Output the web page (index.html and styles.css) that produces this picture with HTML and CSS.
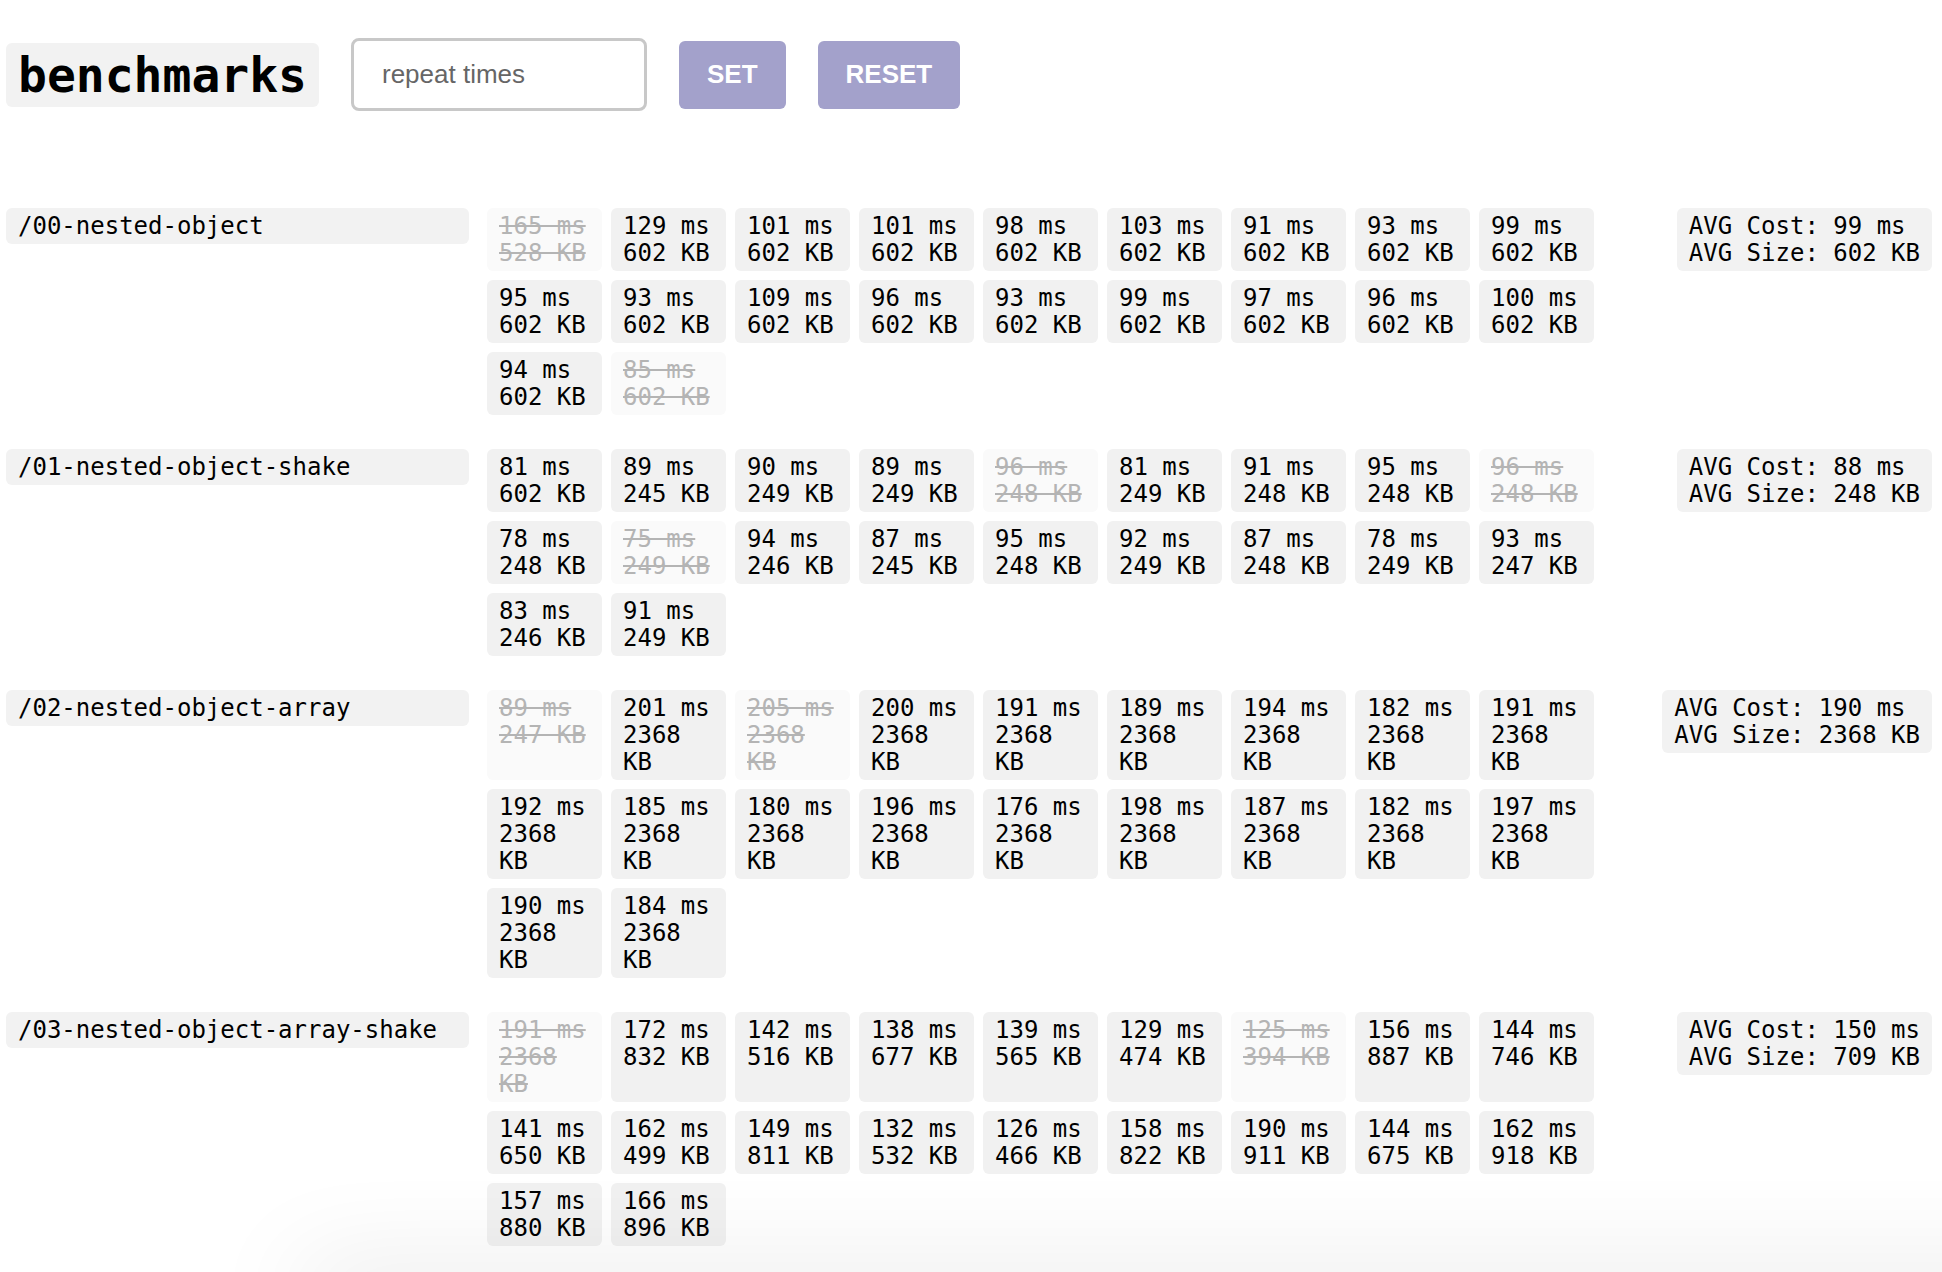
FILE: index.html
```html
<!DOCTYPE html>
<html lang="en">
<head>
<meta charset="utf-8">
<title>benchmarks</title>
<link rel="stylesheet" href="styles.css">
</head>
<body>
<header class="toolbar">
  <h1 class="title">benchmarks</h1>
  <input class="repeat" type="text" placeholder="repeat times">
  <button class="btn">SET</button>
  <button class="btn">RESET</button>
</header>

<main class="suites">
  <section class="bench">
    <div class="name">/00-nested-object</div>
    <div class="runs">
      <div class="run off">165 ms 528 KB</div>
      <div class="run">129 ms 602 KB</div>
      <div class="run">101 ms 602 KB</div>
      <div class="run">101 ms 602 KB</div>
      <div class="run">98 ms 602 KB</div>
      <div class="run">103 ms 602 KB</div>
      <div class="run">91 ms 602 KB</div>
      <div class="run">93 ms 602 KB</div>
      <div class="run">99 ms 602 KB</div>
      <div class="run">95 ms 602 KB</div>
      <div class="run">93 ms 602 KB</div>
      <div class="run">109 ms 602 KB</div>
      <div class="run">96 ms 602 KB</div>
      <div class="run">93 ms 602 KB</div>
      <div class="run">99 ms 602 KB</div>
      <div class="run">97 ms 602 KB</div>
      <div class="run">96 ms 602 KB</div>
      <div class="run">100 ms 602 KB</div>
      <div class="run">94 ms 602 KB</div>
      <div class="run off">85 ms 602 KB</div>
    </div>
    <div class="avg"><div>AVG Cost: 99 ms</div><div>AVG Size: 602 KB</div></div>
  </section>

  <section class="bench">
    <div class="name">/01-nested-object-shake</div>
    <div class="runs">
      <div class="run">81 ms 602 KB</div>
      <div class="run">89 ms 245 KB</div>
      <div class="run">90 ms 249 KB</div>
      <div class="run">89 ms 249 KB</div>
      <div class="run off">96 ms 248 KB</div>
      <div class="run">81 ms 249 KB</div>
      <div class="run">91 ms 248 KB</div>
      <div class="run">95 ms 248 KB</div>
      <div class="run off">96 ms 248 KB</div>
      <div class="run">78 ms 248 KB</div>
      <div class="run off">75 ms 249 KB</div>
      <div class="run">94 ms 246 KB</div>
      <div class="run">87 ms 245 KB</div>
      <div class="run">95 ms 248 KB</div>
      <div class="run">92 ms 249 KB</div>
      <div class="run">87 ms 248 KB</div>
      <div class="run">78 ms 249 KB</div>
      <div class="run">93 ms 247 KB</div>
      <div class="run">83 ms 246 KB</div>
      <div class="run">91 ms 249 KB</div>
    </div>
    <div class="avg"><div>AVG Cost: 88 ms</div><div>AVG Size: 248 KB</div></div>
  </section>

  <section class="bench">
    <div class="name">/02-nested-object-array</div>
    <div class="runs">
      <div class="run off">89 ms 247 KB</div>
      <div class="run">201 ms 2368 KB</div>
      <div class="run off">205 ms 2368 KB</div>
      <div class="run">200 ms 2368 KB</div>
      <div class="run">191 ms 2368 KB</div>
      <div class="run">189 ms 2368 KB</div>
      <div class="run">194 ms 2368 KB</div>
      <div class="run">182 ms 2368 KB</div>
      <div class="run">191 ms 2368 KB</div>
      <div class="run">192 ms 2368 KB</div>
      <div class="run">185 ms 2368 KB</div>
      <div class="run">180 ms 2368 KB</div>
      <div class="run">196 ms 2368 KB</div>
      <div class="run">176 ms 2368 KB</div>
      <div class="run">198 ms 2368 KB</div>
      <div class="run">187 ms 2368 KB</div>
      <div class="run">182 ms 2368 KB</div>
      <div class="run">197 ms 2368 KB</div>
      <div class="run">190 ms 2368 KB</div>
      <div class="run">184 ms 2368 KB</div>
    </div>
    <div class="avg"><div>AVG Cost: 190 ms</div><div>AVG Size: 2368 KB</div></div>
  </section>

  <section class="bench">
    <div class="name">/03-nested-object-array-shake</div>
    <div class="runs">
      <div class="run off">191 ms 2368 KB</div>
      <div class="run">172 ms 832 KB</div>
      <div class="run">142 ms 516 KB</div>
      <div class="run">138 ms 677 KB</div>
      <div class="run">139 ms 565 KB</div>
      <div class="run">129 ms 474 KB</div>
      <div class="run off">125 ms 394 KB</div>
      <div class="run">156 ms 887 KB</div>
      <div class="run">144 ms 746 KB</div>
      <div class="run">141 ms 650 KB</div>
      <div class="run">162 ms 499 KB</div>
      <div class="run">149 ms 811 KB</div>
      <div class="run">132 ms 532 KB</div>
      <div class="run">126 ms 466 KB</div>
      <div class="run">158 ms 822 KB</div>
      <div class="run">190 ms 911 KB</div>
      <div class="run">144 ms 675 KB</div>
      <div class="run">162 ms 918 KB</div>
      <div class="run">157 ms 880 KB</div>
      <div class="run">166 ms 896 KB</div>
    </div>
    <div class="avg"><div>AVG Cost: 150 ms</div><div>AVG Size: 709 KB</div></div>
  </section>
</main>

<div class="edge-shadow"></div>
</body>
</html>
```

FILE: styles.css
```css
html, body {
  margin: 0;
  background: #ffffff;
}

body {
  padding: 0 10px 40px 6px;
  font-family: "DejaVu Sans Mono", "Liberation Mono", monospace;
  font-size: 24px;
  color: #000000;
}

.toolbar {
  display: flex;
  align-items: center;
  gap: 32px;
  margin-top: 38px;
  height: 73px;
}

.title {
  margin: 0;
  padding: 4px 12px;
  background: #f2f2f2;
  border-radius: 6px;
  font-family: "DejaVu Sans Mono", "Liberation Mono", monospace;
  font-size: 48px;
  font-weight: bold;
  line-height: 56px;
}

.repeat {
  box-sizing: border-box;
  width: 296px;
  height: 73px;
  padding: 0 16px 0 28px;
  border: 3px solid #c8c8c8;
  border-radius: 8px;
  font-family: "Liberation Sans", Arial, sans-serif;
  font-size: 26px;
  color: #333333;
  background: #ffffff;
  outline: none;
}

.repeat::placeholder {
  color: #666666;
}

.btn {
  height: 68px;
  padding: 0 28px;
  border: none;
  border-radius: 6px;
  background: #a3a1cb;
  color: #ffffff;
  font-family: "Liberation Sans", Arial, sans-serif;
  font-size: 26px;
  font-weight: bold;
}

.suites {
  margin-top: 97px;
  display: flex;
  flex-direction: column;
  gap: 34px;
}

.bench {
  display: flex;
  align-items: flex-start;
}

.name {
  box-sizing: border-box;
  width: 463px;
  padding: 5px 12px 4px;
  line-height: 27px;
  background: #f2f2f2;
  border-radius: 6px;
  white-space: nowrap;
}

.runs {
  margin-left: 18px;
  display: grid;
  grid-template-columns: repeat(9, 115px);
  gap: 9px;
  align-items: start;
}

.run {
  box-sizing: border-box;
  padding: 5px 12px 4px;
  line-height: 27px;
  background: #f1f1f1;
  border-radius: 6px;
  align-self: stretch;
}

.run.off {
  background: #fafafa;
  color: #b4b4b4;
  text-decoration: line-through;
}

.avg {
  margin-left: auto;
  padding: 5px 12px 4px;
  line-height: 27px;
  background: #f2f2f2;
  border-radius: 6px;
  white-space: nowrap;
}

.edge-shadow {
  position: fixed;
  left: 300px;
  right: -120px;
  bottom: -40px;
  height: 40px;
  box-shadow: 0 0 100px 0 rgba(0, 0, 0, 0.13);
  background: #f0f0f0;
  pointer-events: none;
}
```
